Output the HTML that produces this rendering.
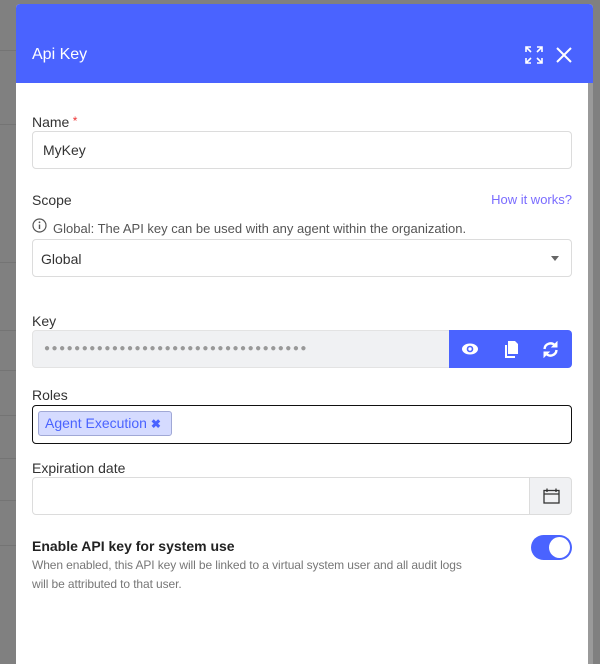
<!DOCTYPE html>
<html><head><style>
*{box-sizing:border-box;margin:0;padding:0}
body{width:600px;height:657px;background:#808080;font-family:"Liberation Sans",sans-serif;position:relative;overflow:hidden;color:#333}
.bgl{position:absolute;left:0;width:16px;height:1px;background:#747474}
.modal{position:absolute;left:16px;top:4px;width:577px;height:660px;background:#fff;border-radius:4px 4px 0 0;overflow:hidden}
.hdr{height:79px;background:#4a63ff;position:relative}
.hdr h1{position:absolute;left:16px;top:42px;font-size:16px;font-weight:normal;color:#fff}
.sb{position:absolute;right:0;top:79px;width:5px;height:600px;background:#9a9a9a}
.lbl{position:absolute;left:16px;font-size:14px;color:#333}
.inp{position:absolute;left:16px;width:540px;height:38px;border:1px solid #dcdcdc;border-radius:4px;font-size:14px;color:#333;padding:10px 9px}
</style></head><body>
<div class="bgl" style="top:50px"></div><div class="bgl" style="top:124px"></div><div class="bgl" style="top:262px"></div><div class="bgl" style="top:330px"></div><div class="bgl" style="top:370px"></div><div class="bgl" style="top:415px"></div><div class="bgl" style="top:458px"></div><div class="bgl" style="top:500px"></div><div class="bgl" style="top:545px"></div>
<div class="modal">
<div class="hdr"><h1>Api Key</h1>
<svg style="position:absolute;left:509px;top:42px" width="18" height="18" viewBox="0 0 18 18" fill="none" stroke="#fff" stroke-width="1.6"><path d="M1 6V1h5M1 1l5 5M17 6V1h-5M17 1l-5 5M1 12v5h5M1 17l5-5M17 12v5h-5M17 17l-5-5"/></svg>
<svg style="position:absolute;left:540px;top:43px" width="16" height="16" viewBox="0 0 16 16" stroke="#fff" stroke-width="2"><path d="M1 1l14 14M15 1L1 15"/></svg>
</div>
<div class="sb"></div>
<div class="lbl" style="top:110px">Name<span style="color:#e33;font-size:12px;vertical-align:top"> *</span></div>
<div class="inp" style="top:127px;height:38px;padding:10px 10px">MyKey</div>
<div class="lbl" style="top:188px">Scope</div>
<div style="position:absolute;right:21px;top:188px;font-size:13px;color:#7a6cff">How it works?</div>
<svg style="position:absolute;left:16px;top:214px" width="15" height="15" viewBox="0 0 15 15"><circle cx="7.5" cy="7.5" r="6.5" fill="none" stroke="#555" stroke-width="1.2"/><path d="M7.5 6.5v4.5" stroke="#555" stroke-width="1.4"/><circle cx="7.5" cy="4.3" r=".9" fill="#555"/></svg>
<div style="position:absolute;left:37px;top:217px;font-size:13px;color:#555">Global: The API key can be used with any agent within the organization.</div>
<div class="inp" style="top:235px;height:38px;padding:11px 8px">Global</div>
<div style="position:absolute;left:535px;top:252px;border:4px solid transparent;border-top:5px solid #666;border-bottom:0"></div>
<div class="lbl" style="top:309px">Key</div>
<div style="position:absolute;left:16px;top:326px;width:418px;height:38px;background:#f0f1f3;border:1px solid #e3e3e3;border-radius:4px 0 0 4px;font-size:10px;color:#999;padding:12px 11px;letter-spacing:1.5px;white-space:nowrap;overflow:hidden">●●●●●●●●●●●●●●●●●●●●●●●●●●●●●●●●●●●</div>
<div style="position:absolute;left:433px;top:326px;width:123px;height:38px;background:#4a63ff;border-radius:0 4px 4px 0"></div>
<svg style="position:absolute;left:445px;top:337px" width="18" height="16" viewBox="0 0 18 16"><ellipse cx="9" cy="8" rx="8" ry="5.5" fill="#fff"/><circle cx="9" cy="8" r="3.3" fill="#4a63ff"/><circle cx="9" cy="8" r="1.7" fill="#fff"/></svg>
<svg style="position:absolute;left:488px;top:337px" width="15" height="17" viewBox="0 0 15 17" fill="#fff"><path d="M4 0h7l3 3v10H4z"/><path d="M1 4h2v11h8v2H1z"/></svg>
<svg style="position:absolute;left:526px;top:337px" width="17" height="17" viewBox="0 0 17 17" fill="none" stroke="#fff" stroke-width="2.4"><path d="M2.5 8A6 6 0 0 1 13 4.5"/><path d="M14.5 9A6 6 0 0 1 4 12.5"/><path d="M15 1v5h-5z" fill="#fff" stroke-width="1"/><path d="M2 16v-5h5z" fill="#fff" stroke-width="1"/></svg>
<div class="lbl" style="top:383px">Roles</div>
<div style="position:absolute;left:16px;top:401px;width:540px;height:39px;border:1px solid #111;border-radius:4px"></div>
<div style="position:absolute;left:22px;top:407px;width:134px;height:25px;background:#d5dbff;border:1px solid #a0a8d6;border-radius:3px;color:#4a63ff;font-size:14px;padding:3px 6px">Agent Execution <b style="font-size:12px">✖</b></div>
<div class="lbl" style="top:456px">Expiration date</div>
<div class="inp" style="top:473px;width:498px;border-radius:4px 0 0 4px"></div>
<div style="position:absolute;left:513px;top:473px;width:43px;height:38px;background:#f0f1f3;border:1px solid #dcdcdc;border-radius:0 4px 4px 0"></div>
<svg style="position:absolute;left:527px;top:484px" width="17" height="16" viewBox="0 0 17 16" fill="none" stroke="#333" stroke-width="1.3"><rect x="1" y="2.5" width="15" height="12.5"/><path d="M1 6h15M4 0.5v3.5M13 0.5v3.5"/></svg>
<div style="position:absolute;left:16px;top:534px;font-size:14px;font-weight:bold;color:#222">Enable API key for system use</div>
<div style="position:absolute;left:16px;top:552px;font-size:12px;color:#777;line-height:19px;width:470px;letter-spacing:-0.1px">When enabled, this API key will be linked to a virtual system user and all audit logs<br>will be attributed to that user.</div>
<div style="position:absolute;left:515px;top:531px;width:41px;height:25px;background:#4a63ff;border-radius:13px"><div style="position:absolute;right:2px;top:2px;width:21px;height:21px;border-radius:50%;background:#fff"></div></div>
</div>
</body></html>
